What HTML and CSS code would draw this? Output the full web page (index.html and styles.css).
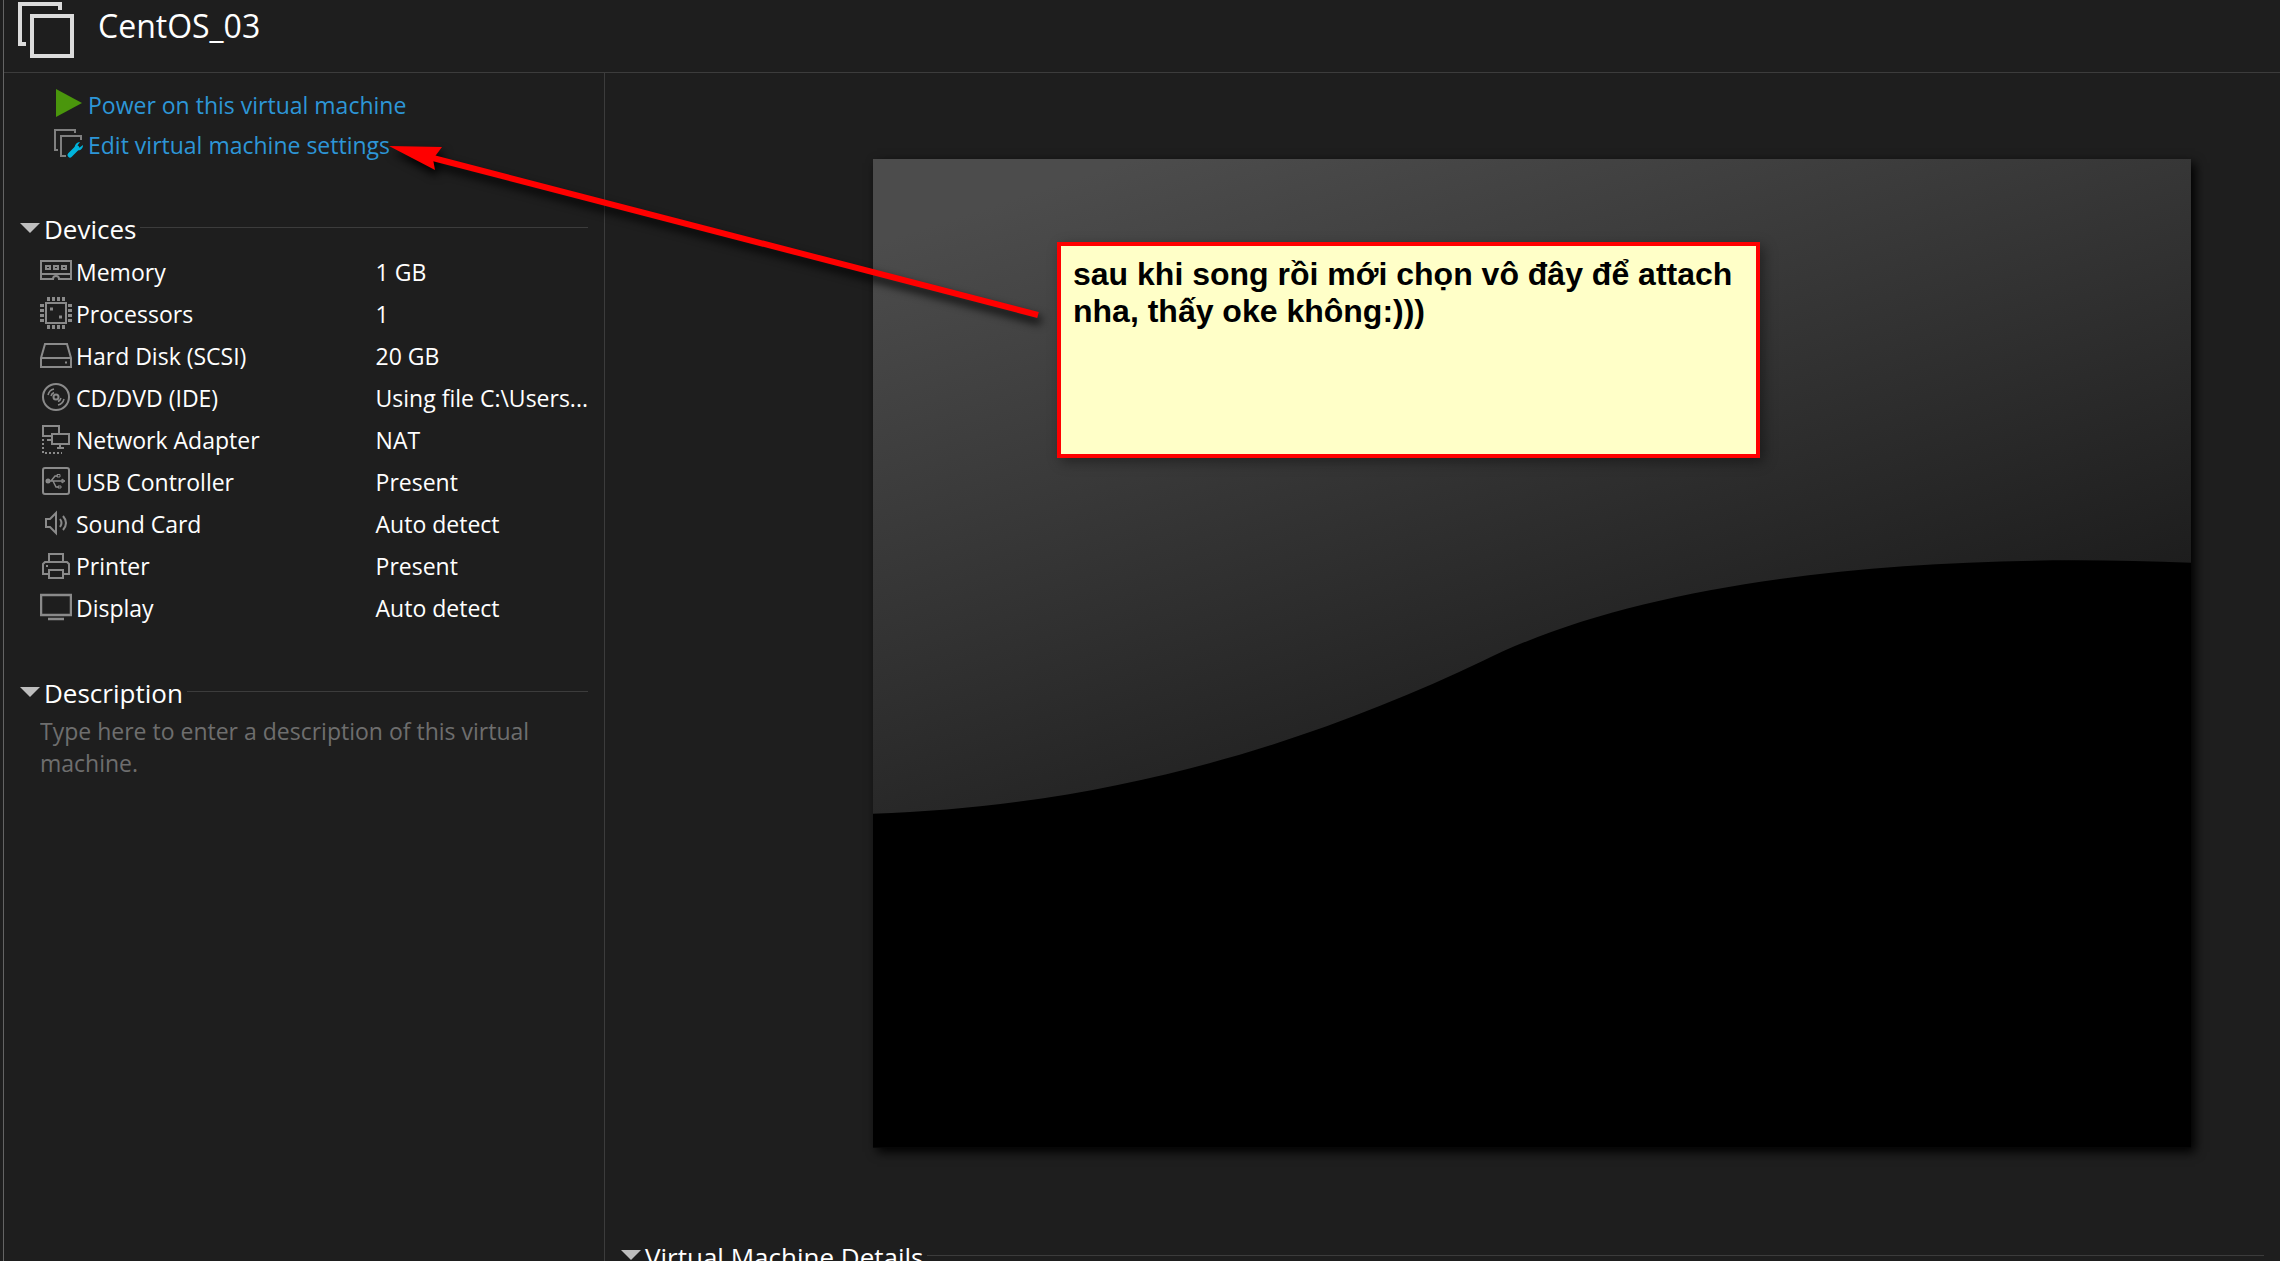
FILE: index.html
```html
<!DOCTYPE html>
<html lang="en">
<head>
<meta charset="utf-8">
<title>CentOS_03</title>
<link rel="stylesheet" href="styles.css">
</head>
<body>
<div class="app">
  <header class="titlebar">
    <svg class="vm-logo" viewBox="0 0 56 56" width="56" height="56" fill="none" stroke="#dcdcdc" stroke-width="4" aria-hidden="true">
      <path d="M8 42H2V2H42V8"/><rect x="14" y="14" width="40" height="40"/>
    </svg>
    <h1>CentOS_03</h1>
  </header>
  <div class="body">
    <aside class="sidebar">
      <nav class="actions">
        <a href="#power"><svg viewBox="0 0 32 32" width="32" height="32" aria-hidden="true"><path d="M4 2L30 16L4 30Z" fill="#4a960c"/></svg>Power on this virtual machine</a>
        <a href="#settings"><svg viewBox="0 0 32 32" width="32" height="32" fill="none" stroke="#808080" stroke-width="2" aria-hidden="true"><path d="M6 23H3V3H23V6"/><path d="M14 29H9V9H29V13"/><path d="M18 28L25 21" stroke="#00b4dc" stroke-width="5" stroke-linecap="round"/><path d="M28 15C24 15 22 19 23 22L25 23C28 24 31 22 31 18L27 21L25 19Z" fill="#00b4dc" stroke="none"/></svg>Edit virtual machine settings</a>
      </nav>
      <section class="group">
        <h2><button type="button" class="toggle"><svg viewBox="0 0 20 10" width="20" height="10" aria-hidden="true"><path d="M0 0H20L10 10Z" fill="#bebebe"/></svg>Devices</button></h2>
        <table class="devices">
          <tr><th scope="row"><svg viewBox="0 0 32 32" width="32" height="32" aria-hidden="true"><path d="M1 6H31V24H19A3 3 0 0 0 13 24H1ZM1 19H31"/><path d="M6 11H10V14H6ZM14 11H18V14H14ZM22 11H26V14H22Z"/></svg>Memory</th><td>1 GB</td></tr>
          <tr><th scope="row"><svg viewBox="0 0 32 32" width="32" height="32" aria-hidden="true"><rect x="6" y="6" width="20" height="20"/><path d="M7 2H25M7 30H25" stroke-width="4" stroke-dasharray="3 2"/><path d="M2 7V25M30 7V25" stroke-width="4" stroke-dasharray="3 2"/><path d="M10 12H13M19 20H22" stroke-width="3"/></svg>Processors</th><td>1</td></tr>
          <tr><th scope="row"><svg viewBox="0 0 32 32" width="32" height="32" aria-hidden="true"><path d="M1 19L5 5H27L31 19V28H1ZM1 19H31M25 23.500H27"/></svg>Hard Disk (SCSI)</th><td>20 GB</td></tr>
          <tr><th scope="row"><svg viewBox="0 0 32 32" width="32" height="32" aria-hidden="true"><circle cx="16" cy="16" r="13"/><circle cx="16" cy="16" r="2.500"/><path d="M8 14A8 8 0 0 1 14 8M11 15A5 5 0 0 1 14 11.500M24 18A8 8 0 0 1 18 24M21 17A5 5 0 0 1 18 20.500" stroke-width="1.500"/></svg>CD/DVD (IDE)</th><td>Using file C:\Users...</td></tr>
          <tr><th scope="row"><svg viewBox="0 0 32 32" width="32" height="32" aria-hidden="true"><path d="M12 13H3V3H19V10M7 17H12M12 11H29V21H12ZM20 21V25M17 25H24"/><path d="M3 16V30H22" stroke-dasharray="2 2"/></svg>Network Adapter</th><td>NAT</td></tr>
          <tr><th scope="row"><svg viewBox="0 0 32 32" width="32" height="32" aria-hidden="true"><rect x="3" y="3" width="26" height="26" rx="2"/><path d="M7 16H24M11 16L15 11H18M13 16L16 22H19" stroke-width="1.500"/><circle cx="8" cy="16" r="1.500"/><path d="M17 9.500H20V12H17ZM18 21H21V23H18ZM22 14L25 16L22 18Z" stroke-width="1"/></svg>USB Controller</th><td>Present</td></tr>
          <tr><th scope="row"><svg viewBox="0 0 32 32" width="32" height="32" aria-hidden="true"><path d="M6 12H10L16 6V26L10 20H6ZM20 12Q23 16 20 20M23 9Q29 16 23 23"/></svg>Sound Card</th><td>Auto detect</td></tr>
          <tr><th scope="row"><svg viewBox="0 0 32 32" width="32" height="32" aria-hidden="true"><path d="M9 13V5H23V13M8 25H3V15L5 13H27L29 15V25H24M9 21H23V29H9ZM6 17H8"/></svg>Printer</th><td>Present</td></tr>
          <tr><th scope="row"><svg viewBox="0 0 32 32" width="32" height="32" aria-hidden="true"><path d="M1 4H31V24H1ZM8 28H24" stroke-width="2.500"/></svg>Display</th><td>Auto detect</td></tr>
        </table>
      </section>
      <section class="group">
        <h2><button type="button" class="toggle"><svg viewBox="0 0 20 10" width="20" height="10" aria-hidden="true"><path d="M0 0H20L10 10Z" fill="#bebebe"/></svg>Description</button></h2>
        <textarea class="description" rows="2" aria-label="Description" placeholder="Type here to enter a description of this virtual machine."></textarea>
      </section>
    </aside>
    <main class="content">
      <div class="screen">
        <svg viewBox="0 0 1318 989" preserveAspectRatio="none" aria-hidden="true"><path d="M0 655C240 647 440 583 610 502C780 417 1060 393 1318 404V989H0Z"/></svg>
      </div>
      <section class="details">
        <h2><button type="button" class="toggle"><svg viewBox="0 0 20 10" width="20" height="10" aria-hidden="true"><path d="M0 0H20L10 10Z" fill="#bebebe"/></svg>Virtual Machine Details</button></h2>
      </section>
    </main>
  </div>
  <svg class="arrow" viewBox="0 0 660 180" width="660" height="180" aria-hidden="true"><path d="M40 11L649 169" stroke="#f00" stroke-width="6"/><path d="M0 0L53 1L44 13L46 24Z" fill="#f00"/></svg>
  <p class="note">sau khi song rồi mới chọn vô đây để attach nha, thấy oke không:)))</p>
</div>
</body>
</html>
```
FILE: styles.css
```css
* { box-sizing: border-box; }

body {
  margin: 0;
  background: #1e1e1e;
  color: #fff;
  font: 23px/32px "Open Sans", "Noto Sans", sans-serif;
}

.app {
  position: relative;
  display: flex;
  flex-direction: column;
  height: 100vh;
  margin-left: 3px;
  border-left: 1px solid #646464;
  overflow: hidden;
}

.titlebar {
  display: flex;
  flex: none;
  gap: 24px;
  height: 73px;
  padding: 2px 14px;
  border-bottom: 1px solid #3c3c3c;
}

h1, h2, p { margin: 0; }

h1 {
  font-size: 32px;
  font-weight: 400;
  line-height: 48px;
}

.body {
  display: flex;
  flex: 1;
  min-height: 0;
}

.sidebar {
  flex: none;
  width: 601px;
  padding: 12px 16px 0;
  border-right: 1px solid #3c3c3c;
}

.actions a {
  display: flex;
  align-items: center;
  gap: 4px;
  height: 40px;
  padding-left: 32px;
  color: #2d96d7;
  text-decoration: none;
}

.actions svg { margin-top: -4px; }

.group { margin-top: 46px; }

h2 {
  display: flex;
  align-items: center;
  gap: 4px;
  height: 36px;
}

h2::after {
  content: "";
  flex: 1;
  height: 1px;
  margin-top: -3px;
  background: #3c3c3c;
}

.toggle {
  display: flex;
  align-items: center;
  gap: 4px;
  padding: 0;
  border: 0;
  background: none;
  color: #fff;
  font: 26px/36px "Open Sans", "Noto Sans", sans-serif;
}

.toggle svg { margin-top: -3px; }

.devices {
  width: 100%;
  margin-top: 4px;
  border-collapse: collapse;
}

.devices td, .devices th {
  height: 42px;
  padding: 0;
  font-weight: 400;
  text-align: left;
  white-space: nowrap;
}

.devices th {
  display: flex;
  align-items: center;
  gap: 4px;
  padding-left: 20px;
}

.devices td { width: 211px; }

.devices svg {
  margin-top: -2px;
  fill: none;
  stroke: #8a8a8a;
  stroke-width: 2;
}

.description {
  display: block;
  width: 520px;
  margin-left: 20px;
  padding: 4px 0;
  border: 0;
  background: none;
  color: #fff;
  font: inherit;
  resize: none;
  overflow: hidden;
}

.description::placeholder { color: #6e6e6e; }

.content { flex: 1; }

.screen {
  width: 78.7%;
  aspect-ratio: 4 / 3;
  margin: 86px 89px 0 auto;
  background: linear-gradient(162deg, #4c4c4c 6%, #1c1c1c 60%);
  box-shadow: 4px 4px 10px #000;
}

.screen svg {
  display: block;
  width: 100%;
  height: 100%;
}

.details { padding: 91px 16px 0; }

.arrow {
  position: absolute;
  left: 385px;
  top: 146px;
  overflow: visible;
  filter: drop-shadow(3px 6px 5px #000);
}

.note {
  position: absolute;
  left: 1053px;
  top: 242px;
  width: 703px;
  height: 216px;
  padding: 10px 12px;
  border: 4px solid #f00;
  background: #ffffc8;
  color: #000;
  font: bold 32px/37px "Liberation Sans", Arial, sans-serif;
  box-shadow: 4px 4px 12px #0006;
}
```
